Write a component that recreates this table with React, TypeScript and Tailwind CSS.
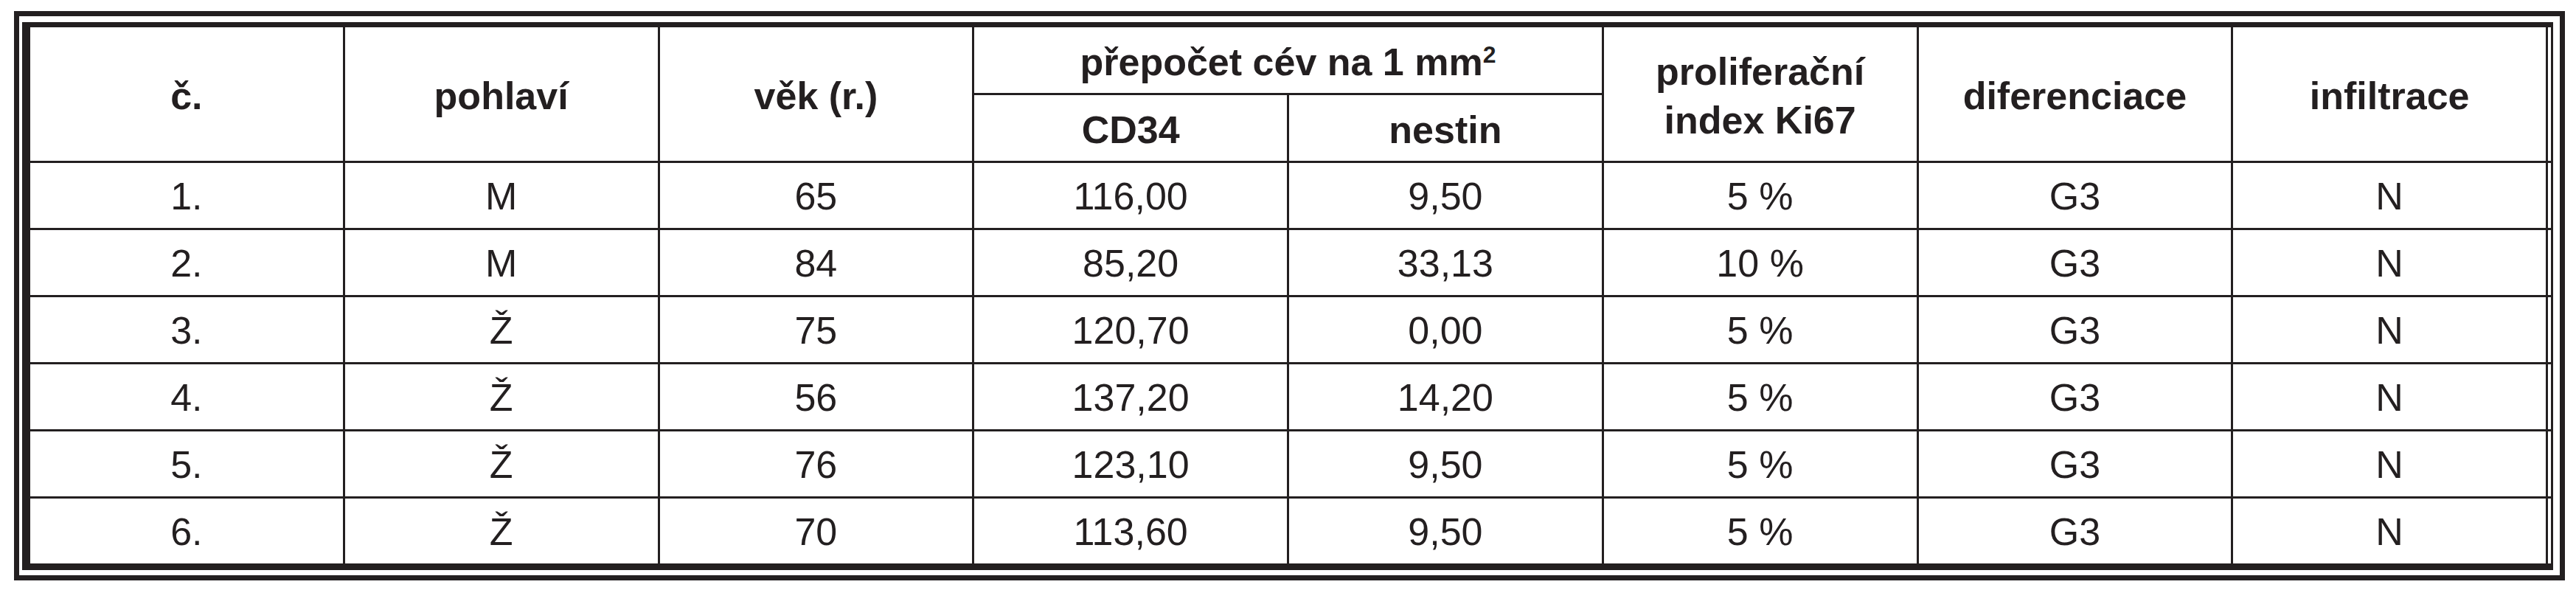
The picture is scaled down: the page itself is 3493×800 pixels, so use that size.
import type { JSX } from "react";

type Row = {
	no: string;
	sex: string;
	age: string;
	cd34: string;
	nestin: string;
	ki67: string;
	grade: string;
	infiltration: string;
};

const rows: Row[] = [
	{ no: "1.", sex: "M", age: "65", cd34: "116,00", nestin: "9,50", ki67: "5 %", grade: "G3", infiltration: "N" },
	{ no: "2.", sex: "M", age: "84", cd34: "85,20", nestin: "33,13", ki67: "10 %", grade: "G3", infiltration: "N" },
	{ no: "3.", sex: "Ž", age: "75", cd34: "120,70", nestin: "0,00", ki67: "5 %", grade: "G3", infiltration: "N" },
	{ no: "4.", sex: "Ž", age: "56", cd34: "137,20", nestin: "14,20", ki67: "5 %", grade: "G3", infiltration: "N" },
	{ no: "5.", sex: "Ž", age: "76", cd34: "123,10", nestin: "9,50", ki67: "5 %", grade: "G3", infiltration: "N" },
	{ no: "6.", sex: "Ž", age: "70", cd34: "113,60", nestin: "9,50", ki67: "5 %", grade: "G3", infiltration: "N" },
];

function HeadCell({
	children,
	className = "",
}: {
	children?: React.ReactNode;
	className?: string;
}): JSX.Element {
	return (
		<div
			className={`flex items-center justify-center bg-white pt-[4px] text-center font-bold ${className}`}
		>
			{children}
		</div>
	);
}

function Cell({ children }: { children?: React.ReactNode }): JSX.Element {
	return (
		<div className="flex items-center justify-center bg-white pt-[2px]">
			{children}
		</div>
	);
}

export default function App(): JSX.Element {
	return (
		<div className="h-[800px] w-[3493px] bg-white pl-[19px] pt-[15px] font-['Liberation_Sans',Arial,sans-serif] text-[52px] leading-none text-[#231f20]">
			<div className="w-[3459px] border-[7px] border-[#231f20] pb-[7px] pl-[4px] pr-[9px] pt-[8px]">
				<div className="border-b-[9px] border-l-[11px] border-r-[3px] border-t-[7px] border-[#231f20]">
					<div className="grid grid-cols-[repeat(8,1fr)_4px] grid-rows-[89px_89px_repeat(6,88px)] gap-[3px] bg-[#231f20]">
						<HeadCell className="row-span-2">č.</HeadCell>
						<HeadCell className="row-span-2">pohlaví</HeadCell>
						<HeadCell className="row-span-2">věk (r.)</HeadCell>
						<HeadCell className="col-span-2">
							<span>
								přepočet cév na 1 mm
								<sup className="-top-[17px] text-[32px]">2</sup>
							</span>
						</HeadCell>
						<HeadCell className="row-span-2 leading-[66px]">
							proliferační
							<br />
							index Ki67
						</HeadCell>
						<HeadCell className="row-span-2">diferenciace</HeadCell>
						<HeadCell className="row-span-2">infiltrace</HeadCell>
						<HeadCell className="row-span-2" />
						<HeadCell>CD34</HeadCell>
						<HeadCell>nestin</HeadCell>

						{rows.map((row) => (
							<div key={row.no} className="contents">
								<Cell>{row.no}</Cell>
								<Cell>{row.sex}</Cell>
								<Cell>{row.age}</Cell>
								<Cell>{row.cd34}</Cell>
								<Cell>{row.nestin}</Cell>
								<Cell>{row.ki67}</Cell>
								<Cell>{row.grade}</Cell>
								<Cell>{row.infiltration}</Cell>
								<Cell />
							</div>
						))}
					</div>
				</div>
			</div>
		</div>
	);
}
